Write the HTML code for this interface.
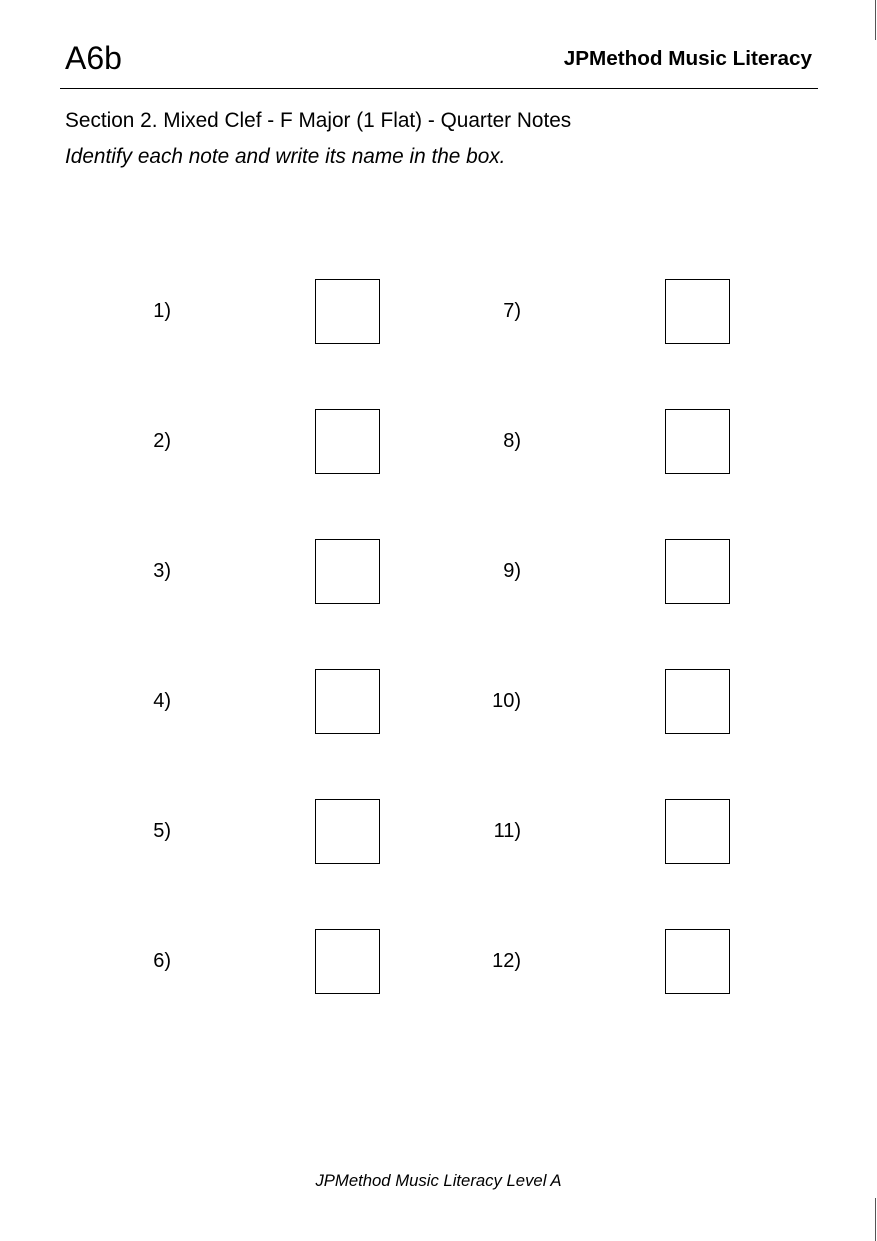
<!DOCTYPE html>
<html><head><style>
body{margin:0;width:877px;height:1241px;background:#fff;position:relative;font-family:"Liberation Sans",sans-serif;color:#000;overflow:hidden}
.a{position:absolute;white-space:nowrap;line-height:1}
.b{position:absolute;width:63px;height:63px;border:1px solid #000;box-sizing:content-box}
.l{position:absolute;font-size:20px;line-height:1;text-align:right;width:60px}
</style></head><body>
<div style="position:absolute;left:875px;top:0;width:1px;height:40px;background:#555"></div>
<div style="position:absolute;left:875px;top:1198px;width:1px;height:43px;background:#555"></div>
<div class="a" style="left:65px;top:42px;font-size:32px">A6b</div>
<div class="a" style="right:65px;top:49px;font-size:20.7px;font-weight:bold">JPMethod Music Literacy</div>
<div style="position:absolute;left:60px;top:88px;width:758px;height:1px;background:#000"></div>
<div class="a" style="left:65px;top:111px;font-size:20.8px">Section 2. Mixed Clef - F Major (1 Flat) - Quarter Notes</div>
<div class="a" style="left:65px;top:147px;font-size:20.8px;font-style:italic">Identify each note and write its name in the box.</div>
<div class="a" style="left:0;width:877px;text-align:center;top:1173px;font-size:16.7px;font-style:italic">JPMethod Music Literacy Level A</div>

<div class="l" style="left:111px;top:301px">1)</div><div class="b" style="left:315px;top:279px"></div>
<div class="l" style="left:461px;top:301px">7)</div><div class="b" style="left:665px;top:279px"></div>
<div class="l" style="left:111px;top:431px">2)</div><div class="b" style="left:315px;top:409px"></div>
<div class="l" style="left:461px;top:431px">8)</div><div class="b" style="left:665px;top:409px"></div>
<div class="l" style="left:111px;top:561px">3)</div><div class="b" style="left:315px;top:539px"></div>
<div class="l" style="left:461px;top:561px">9)</div><div class="b" style="left:665px;top:539px"></div>
<div class="l" style="left:111px;top:691px">4)</div><div class="b" style="left:315px;top:669px"></div>
<div class="l" style="left:461px;top:691px">10)</div><div class="b" style="left:665px;top:669px"></div>
<div class="l" style="left:111px;top:821px">5)</div><div class="b" style="left:315px;top:799px"></div>
<div class="l" style="left:461px;top:821px">11)</div><div class="b" style="left:665px;top:799px"></div>
<div class="l" style="left:111px;top:951px">6)</div><div class="b" style="left:315px;top:929px"></div>
<div class="l" style="left:461px;top:951px">12)</div><div class="b" style="left:665px;top:929px"></div>
</body></html>
